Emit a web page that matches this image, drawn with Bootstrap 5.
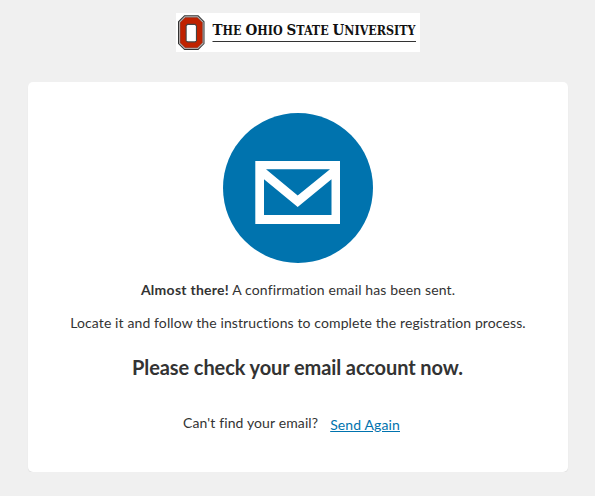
<!DOCTYPE html>
<html lang="en">
<head>
<meta charset="utf-8">
<meta name="viewport" content="width=device-width, initial-scale=1">
<title>Confirm your email</title>
<link href="https://cdn.jsdelivr.net/npm/bootstrap@5.3.0/dist/css/bootstrap.min.css" rel="stylesheet">
<style>
body { background: #f0f0f0; color: #333; font: 14px/20px Lato, sans-serif; letter-spacing: .11px; }
.brand-bar { height: 39px; margin-top: 13px; margin-bottom: 30px; padding-left: 1px; }
.panel { width: 540px; height: 390px; margin-left: 28px; padding-top: 31px; border-radius: 5px; box-shadow: 0 1px 1px rgba(0,0,0,.08); }
.intro { margin: 17px 0 13px; letter-spacing: .13px; }
.intro strong { letter-spacing: .26px; }
.headline { font-size: 20px; line-height: 24px; font-weight: 700; margin: 22px 0 34px; padding-right: 1px; letter-spacing: -.1px; }
.resend { gap: 12px; padding-right: 13px; letter-spacing: .12px; }
.resend a { color: #0073ae; margin-top: 2px; }
.wordmark { font-family: "DejaVu Serif Condensed", "DejaVu Serif", serif; font-weight: 700; font-size: 12px; letter-spacing: 0; fill: #111; }
.wordmark .cap { font-size: 14.6px; }
</style>
</head>
<body>
<header class="brand-bar d-flex justify-content-center">
  <svg width="244" height="39" viewBox="0 0 244 39" role="img" aria-label="The Ohio State University">
    <path fill="#fff" d="M0 0h244v39H0z"/>
    <path fill="#333" d="M8.300 2.300h14l6.200 6.200v22.300L22.300 37h-14L2 30.800V8.500z"/>
    <path fill="#b8b8b8" d="M8.700 3.200h13.200l5.700 5.700v21.500l-5.700 5.700H8.700L3 30.400V8.900z"/>
    <path fill="#c02200" stroke="#6e2a20" stroke-width=".4" d="M9.200 4.600h12.200l5 5v20.200l-5 5H9.200l-5-5V9.600z"/>
    <path fill="#444" d="M11.300 10.800h8l1.700 1.700v15.300l-1.700 1.700h-8l-1.700-1.700V12.500z"/>
    <path fill="#fff" d="M11.700 12h7.200l1 1v14.300l-1 1h-7.200l-1-1V13z"/>
    <text class="wordmark" x="36.500" y="22.300" textLength="203" lengthAdjust="spacingAndGlyphs"><tspan class="cap">T</tspan>HE <tspan class="cap">O</tspan>HIO <tspan class="cap">S</tspan>TATE <tspan class="cap">U</tspan>NIVERSITY</text>
    <path fill="#333" d="M36.500 28H240v1H36.500z"/>
  </svg>
</header>
<main class="panel bg-white text-center">
  <svg class="d-block mx-auto" width="150" height="150" viewBox="0 0 150 150" aria-hidden="true">
    <circle cx="75" cy="75" r="75" fill="#0073ae"/>
    <path fill="#fff" d="M32.300 48H117v63H32.300z"/>
    <path fill="#0073ae" d="M43 56.200h64L74.700 82.600zM41 66.300l33.700 27.700L108.500 66.300V102H41z"/>
  </svg>
  <p class="intro"><strong>Almost there!</strong> A confirmation email has been sent.</p>
  <p class="mb-0">Locate it and follow the instructions to complete the registration process.</p>
  <h1 class="headline">Please check your email account now.</h1>
  <div class="resend d-flex justify-content-center"><span>Can't find your email?</span><a href="#">Send Again</a></div>
</main>
<script src="https://cdn.jsdelivr.net/npm/bootstrap@5.3.0/dist/js/bootstrap.bundle.min.js"></script>
</body>
</html>
